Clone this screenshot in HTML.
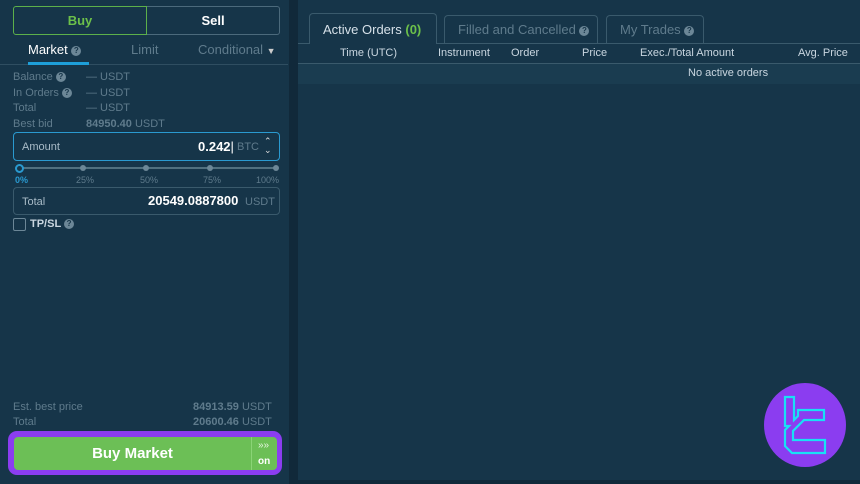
<!DOCTYPE html>
<html><head><meta charset="utf-8"><style>
*{margin:0;padding:0;box-sizing:border-box}
body{width:860px;height:484px;background:#11293a;font-family:"Liberation Sans",sans-serif;position:relative;overflow:hidden;color:#c9d6e0}
.abs{position:absolute}
.lp{left:0;top:0;width:289px;height:484px;background:#163549}
.rp{left:298px;top:0;width:562px;height:480px;background:#163549}
.q{display:inline-block;width:10px;height:10px;border-radius:50%;background:#6c8797;color:#163549;font-size:8px;font-weight:bold;text-align:center;line-height:10px;vertical-align:middle}
.lbl{font-size:11px;color:#5f7b8c}
</style></head><body>
<div class="abs lp"></div>
<div class="abs rp"></div>
<!-- buy/sell -->
<div class="abs" style="left:13px;top:6px;width:134px;height:29px;border:1px solid #5cb04a;border-radius:3px 0 0 3px;color:#6cc04a;font-weight:bold;font-size:13px;text-align:center;line-height:27px">Buy</div>
<div class="abs" style="left:147px;top:6px;width:133px;height:29px;border:1px solid #4c6a7c;border-left:none;border-radius:0 3px 3px 0;color:#fff;font-weight:bold;font-size:13px;text-align:center;line-height:27px">Sell</div>
<div class="abs" style="left:28px;top:42px;font-size:13px;color:#fff">Market <span class="q">?</span></div>
<div class="abs" style="left:131px;top:42px;font-size:13px;color:#5f7b8c">Limit</div>
<div class="abs" style="left:198px;top:42px;font-size:13px;color:#5f7b8c">Conditional <span style="color:#ccc;font-size:9px">▼</span></div>
<div class="abs" style="left:0;top:64px;width:288px;height:1px;background:#2f4e61"></div>
<div class="abs" style="left:28px;top:62px;width:61px;height:3px;background:#1e9fd9"></div>
<div class="abs lbl" style="left:13px;top:71px">Balance <span class="q">?</span></div><div class="abs lbl" style="left:86px;top:71px">— USDT</div>
<div class="abs lbl" style="left:13px;top:87px">In Orders <span class="q">?</span></div><div class="abs lbl" style="left:86px;top:87px">— USDT</div>
<div class="abs lbl" style="left:13px;top:102px">Total</div><div class="abs lbl" style="left:86px;top:102px">— USDT</div>
<div class="abs lbl" style="left:13px;top:118px">Best bid</div><div class="abs lbl" style="left:86px;top:118px"><b>84950.40</b> USDT</div>
<div class="abs" style="left:13px;top:132px;width:267px;height:29px;border:1px solid #2a9ad0;border-radius:4px"></div>
<div class="abs" style="left:22px;top:141px;font-size:11px;color:#a9bcc8">Amount</div>
<div class="abs" style="left:198px;top:139px;font-size:13px;color:#fff;font-weight:bold">0.242<span style="font-weight:normal">|</span></div>
<div class="abs lbl" style="left:237px;top:141px">BTC</div>
<div class="abs" style="left:264px;top:137px;font-size:9px;color:#ddd;line-height:9px">⌃<br>⌄</div>
<div class="abs" style="left:18px;top:167px;width:258px;height:2px;background:#51707f"></div>
<div class="abs" style="left:15px;top:164px;width:9px;height:9px;border-radius:50%;border:2px solid #2a9ad0;background:#163549"></div>
<div class="abs" style="left:80px;top:165px;width:6px;height:6px;border-radius:50%;background:#6c8797"></div>
<div class="abs" style="left:143px;top:165px;width:6px;height:6px;border-radius:50%;background:#6c8797"></div>
<div class="abs" style="left:207px;top:165px;width:6px;height:6px;border-radius:50%;background:#6c8797"></div>
<div class="abs" style="left:273px;top:165px;width:6px;height:6px;border-radius:50%;background:#6c8797"></div>
<div class="abs" style="left:15px;top:175px;font-size:9px;color:#2a9ad0;font-weight:bold">0%</div>
<div class="abs" style="left:76px;top:175px;font-size:9px;color:#5f7b8c">25%</div>
<div class="abs" style="left:140px;top:175px;font-size:9px;color:#5f7b8c">50%</div>
<div class="abs" style="left:203px;top:175px;font-size:9px;color:#5f7b8c">75%</div>
<div class="abs" style="left:256px;top:175px;font-size:9px;color:#5f7b8c">100%</div>
<div class="abs" style="left:13px;top:187px;width:267px;height:28px;border:1px solid #3a5a6c;border-radius:4px"></div>
<div class="abs" style="left:22px;top:196px;font-size:11px;color:#a9bcc8">Total</div>
<div class="abs" style="left:148px;top:193px;font-size:13px;color:#fff;font-weight:bold">20549.0887800</div>
<div class="abs lbl" style="left:245px;top:196px">USDT</div>
<div class="abs" style="left:13px;top:218px;width:13px;height:13px;border:1px solid #6c8797;border-radius:2px"></div>
<div class="abs" style="left:30px;top:218px;font-size:11px;color:#c9d6e0;font-weight:bold">TP/SL <span class="q">?</span></div>
<div class="abs lbl" style="left:13px;top:401px">Est. best price</div><div class="abs lbl" style="left:193px;top:401px"><b>84913.59</b> USDT</div>
<div class="abs lbl" style="left:13px;top:416px">Total</div><div class="abs lbl" style="left:193px;top:416px"><b>20600.46</b> USDT</div>
<div class="abs" style="left:8px;top:431px;width:274px;height:44px;border-radius:9px;background:#8b3df0"></div>
<div class="abs" style="left:14px;top:437px;width:263px;height:33px;border-radius:4px;background:#6cbf56"></div>
<div class="abs" style="left:14px;top:437px;width:237px;height:33px;color:#fff;font-weight:bold;font-size:15px;text-align:center;line-height:33px">Buy Market</div>
<div class="abs" style="left:251px;top:437px;width:1px;height:33px;background:#8ad476"></div>
<div class="abs" style="left:258px;top:440px;font-size:10px;color:#e6f5e0">»»</div>
<div class="abs" style="left:258px;top:456px;font-size:10px;color:#fff;font-weight:bold">on</div>
<!-- right tabs -->
<div class="abs" style="left:298px;top:43px;width:562px;height:1px;background:#3a5a6c"></div>
<div class="abs" style="left:309px;top:13px;width:128px;height:31px;border:1px solid #3a5a6c;border-bottom:none;border-radius:4px 4px 0 0;background:#163549;font-size:13px;color:#d5e0e8;padding:8px 0 0 13px">Active Orders <b style="color:#6cc04a">(0)</b></div>
<div class="abs" style="left:444px;top:15px;width:154px;height:28px;border:1px solid #3a5a6c;border-bottom:none;border-radius:4px 4px 0 0;font-size:13px;color:#5f7b8c;padding:6px 0 0 13px">Filled and Cancelled <span class="q">?</span></div>
<div class="abs" style="left:606px;top:15px;width:98px;height:28px;border:1px solid #3a5a6c;border-bottom:none;border-radius:4px 4px 0 0;font-size:13px;color:#5f7b8c;padding:6px 0 0 13px">My Trades <span class="q">?</span></div>
<div class="abs" style="left:340px;top:47px;font-size:11px;color:#c9d6e0">Time (UTC)</div>
<div class="abs" style="left:438px;top:47px;font-size:11px;color:#c9d6e0">Instrument</div>
<div class="abs" style="left:511px;top:47px;font-size:11px;color:#c9d6e0">Order</div>
<div class="abs" style="left:582px;top:47px;font-size:11px;color:#c9d6e0">Price</div>
<div class="abs" style="left:640px;top:47px;font-size:11px;color:#c9d6e0">Exec./Total Amount</div>
<div class="abs" style="left:798px;top:47px;font-size:11px;color:#c9d6e0">Avg. Price</div>
<div class="abs" style="left:298px;top:63px;width:562px;height:1px;background:#3a5a6c"></div>
<div class="abs" style="left:298px;top:64px;width:562px;height:20px;background:#1a3c50"></div>
<div class="abs" style="left:688px;top:67px;font-size:11px;color:#c9d6e0">No active orders</div>
<!-- logo -->
<svg class="abs" style="left:760px;top:380px" width="100" height="95" viewBox="0 0 100 95">
<ellipse cx="45" cy="45" rx="41" ry="42" fill="#8b3df0"/>
<path d="M25 17 H34 V40 L38 36 V30 H64 V40 H44 L33 51 V60 H65 V73 H32 L25 66 V50 L29 46 L25 46 Z" fill="none" stroke="#19e0f5" stroke-width="2.2"/>
</svg>
</body></html>
